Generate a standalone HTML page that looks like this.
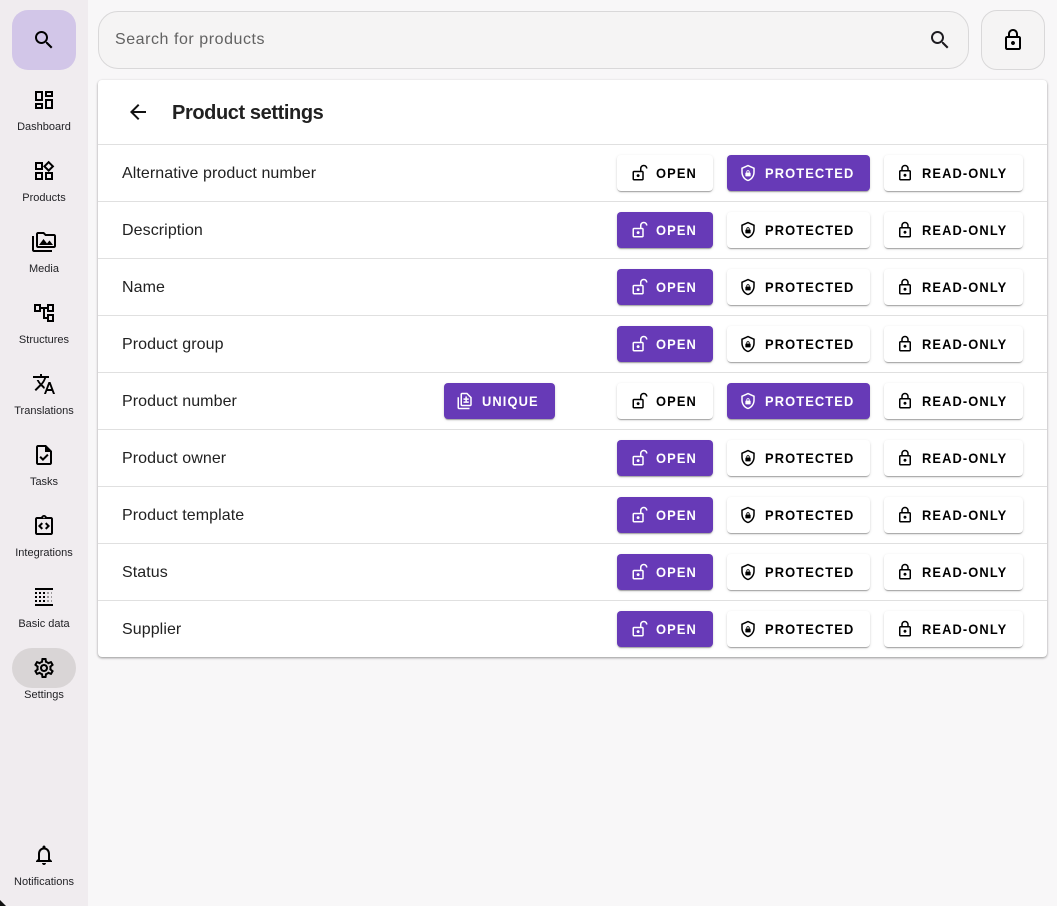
<!DOCTYPE html>
<html lang="en">
<head>
<meta charset="utf-8">
<title>Product settings</title>
<style>
html,body{margin:0;padding:0}
body{width:1057px;height:906px;position:relative;overflow:hidden;background:#f8f7f8;font-family:"Liberation Sans",sans-serif;color:#1d1b20}
svg{display:block;fill:currentColor}
.abs{position:absolute}
#side{position:absolute;left:0;top:0;width:88px;height:906px;background:#f0ecef}
.tile{position:absolute;left:12px;width:64px}
.nav svg{position:absolute;left:32px;width:24px;height:24px;color:#000}
.lbl{position:absolute;left:0;width:88px;text-align:center;font-size:11px;line-height:14px;color:#1f1f23;letter-spacing:0}
#search{position:absolute;left:98px;top:11px;width:869px;height:56px;background:#f5f4f4;border:1px solid #d9d8d9;border-radius:20px}
#search span{position:absolute;left:16px;top:18px;font-size:16px;line-height:20px;letter-spacing:.55px;color:#626262}
#lockbtn{position:absolute;left:981px;top:10px;width:62px;height:58px;background:#f5f4f4;border:1px solid #d9d8d9;border-radius:16px}
#card{position:absolute;left:98px;top:80px;width:949px;height:577px;background:#fff;border-radius:4px;box-shadow:0 1px 2px rgba(0,0,0,.32),0 1px 3px rgba(0,0,0,.1)}
#card h1{position:absolute;left:74px;top:21px;margin:0;font-size:20px;line-height:24px;font-weight:bold;color:#212121;letter-spacing:-.4px}
.row{position:absolute;left:0;width:949px;height:57px;border-top:1px solid #e0e0e0;box-sizing:border-box}
.row .t{position:absolute;left:24px;top:19px;font-size:16px;line-height:20px;color:#212121;letter-spacing:.08px}
.b{position:absolute;top:10px;height:36px;border-radius:4px;background:#fff;color:#000;box-shadow:0 2px 1px -1px rgba(0,0,0,.2),0 1px 1px rgba(0,0,0,.14),0 1px 3px rgba(0,0,0,.12);font-size:14px;line-height:36px;font-weight:bold;letter-spacing:1.2px;white-space:nowrap}
.b.on{background:#673ab7;color:#fff}
.b svg{position:absolute;top:9px;width:18px;height:18px}
.b span{position:absolute;top:0;transform:scaleX(.92);transform-origin:0 50%}
.o{left:519px;width:96px}.o svg{left:13.5px}.o span{left:39px}
.p{left:629px;width:143px}.p svg{left:12px}.p span{left:38px}
.r{left:786px;width:139px}.r svg{left:12px}.r span{left:38px}
.u{left:346px;width:111px}.u svg{left:12px}.u span{left:38px}
</style>
</head>
<body>
<svg width="0" height="0" style="position:absolute">
<defs>
<symbol id="i-search" viewBox="0 0 24 24"><path d="M15.5 14h-.79l-.28-.27C15.41 12.59 16 11.11 16 9.5 16 5.91 13.09 3 9.5 3S3 5.91 3 9.5 5.91 16 9.5 16c1.61 0 3.09-.59 4.23-1.57l.27.28v.79l5 4.99L20.49 19l-4.99-5zm-6 0C7.01 14 5 11.99 5 9.5S7.01 5 9.5 5 14 7.01 14 9.5 11.99 14 9.5 14z"/></symbol>
<symbol id="i-lock" viewBox="0 0 24 24"><path d="M18 8h-1V6c0-2.76-2.24-5-5-5S7 3.24 7 6v2H6c-1.1 0-2 .9-2 2v10c0 1.1.9 2 2 2h12c1.1 0 2-.9 2-2V10c0-1.1-.9-2-2-2zM9 6c0-1.66 1.34-3 3-3s3 1.34 3 3v2H9V6zm9 14H6V10h12v10zm-6-3c1.1 0 2-.9 2-2s-.9-2-2-2-2 .9-2 2 .9 2 2 2z"/></symbol>
<symbol id="i-open" viewBox="0 0 24 24"><path d="M4 9h8V6c0-2.76 2.24-5 5-5s5 2.24 5 5h-2c0-1.66-1.34-3-3-3s-3 1.34-3 3v3h1c1.1 0 2 .9 2 2v9c0 1.1-.9 2-2 2H4c-1.1 0-2-.9-2-2v-9c0-1.1.9-2 2-2zm0 11h11v-9H4v9zm5.5-2.5c-1.1 0-2-.9-2-2s.9-2 2-2 2 .9 2 2-.9 2-2 2z"/></symbol>
<symbol id="i-shield" viewBox="0 0 24 24"><path d="M12 1L3 5v6c0 5.55 3.84 10.74 9 12 5.16-1.26 9-6.45 9-12V5l-9-4zm7 10c0 4.52-2.98 8.69-7 9.93-4.02-1.24-7-5.41-7-9.93V6.3l7-3.11 7 3.11V11z"/><path d="M14.6 11.5h-.4v-1.2c0-1.2-1-2.2-2.2-2.2s-2.2 1-2.2 2.2v1.2h-.4c-.5 0-.9.4-.9.9v3.2c0 .5.4.9.9.9h5.2c.5 0 .9-.4.9-.9v-3.2c0-.5-.4-.9-.9-.9zm-1.6 0h-2v-1.2c0-.55.45-1 1-1s1 .45 1 1v1.2z"/></symbol>
<symbol id="i-unique" viewBox="0 0 24 24"><path d="M18 23H4c-1.1 0-2-.9-2-2V7h2v14h14v2zM15 1H8c-1.1 0-1.99.9-1.99 2L6 17c0 1.1.89 2 1.99 2H19c1.1 0 2-.9 2-2V7l-6-6zm4 16H8V3h6.17L19 7.83V17zM14.5 6h-2v2.5H10v2h2.5V13h2v-2.5H17v-2h-2.5V6zM10 14.5h7v-2h-7v2z"/></symbol>
</defs>
</svg>

<div id="side">
  <div class="tile" style="top:10px;height:60px;background:#d2c6e8;border-radius:16px"></div>
  <div class="tile" style="top:648px;height:40px;background:#d9d5d6;border-radius:20px"></div>
  <div class="nav">
    <svg viewBox="0 0 24 24" style="top:28px"><path d="M15.5 14h-.79l-.28-.27C15.41 12.59 16 11.11 16 9.5 16 5.91 13.09 3 9.5 3S3 5.91 3 9.5 5.91 16 9.5 16c1.61 0 3.09-.59 4.23-1.57l.27.28v.79l5 4.99L20.49 19l-4.99-5zm-6 0C7.01 14 5 11.99 5 9.5S7.01 5 9.5 5 14 7.01 14 9.5 11.99 14 9.5 14z"/></svg>
    <svg viewBox="0 0 24 24" style="top:88px"><path d="M19 5v2h-4V5h4M9 5v6H5V5h4m10 8v6h-4v-6h4M9 17v2H5v-2h4M21 3h-8v6h8V3zM11 3H3v10h8V3zm10 8h-8v10h8V11zm-10 4H3v6h8v-6z"/></svg>
    <svg viewBox="0 0 24 24" style="top:159px"><path d="M16.66 4.52l2.83 2.83-2.83 2.83-2.83-2.83 2.83-2.83M9 5v4H5V5h4m10 10v4h-4v-4h4M9 15v4H5v-4h4m7.66-13.31L11 7.34 16.66 13l5.66-5.66-5.66-5.65zM11 3H3v8h8V3zm10 10h-8v8h8v-8zm-10 0H3v8h8v-8z"/></svg>
    <svg viewBox="0 0 24 24" style="top:230px"><path d="M2 6H0v5h.01L0 20c0 1.1.9 2 2 2h18v-2H2V6zm5 9h14l-3.5-4.5-2.5 3.01L11.5 9zM22 4h-8l-2-2H6c-1.1 0-1.99.9-1.99 2L4 16c0 1.1.9 2 2 2h16c1.1 0 2-.9 2-2V6c0-1.1-.9-2-2-2zm0 12H6V4h5.17l1.41 1.41.59.59H22v10z"/></svg>
    <svg viewBox="0 0 24 24" style="top:301px"><path d="M22 11V3h-7v3H9V3H2v8h7V8h2v10h4v3h7v-8h-7v3h-2V8h2v3h7zM7 9H4V5h3v4zm10 6h3v4h-3v-4zm0-10h3v4h-3V5z"/></svg>
    <svg viewBox="0 0 24 24" style="top:372px"><path d="M12.87 15.07l-2.54-2.51.03-.03c1.74-1.94 2.98-4.17 3.71-6.53H17V4h-7V2H8v2H1v1.99h11.17C11.5 7.92 10.44 9.75 9 11.35 8.07 10.32 7.3 9.19 6.69 8h-2c.73 1.63 1.73 3.17 2.98 4.56l-5.09 5.02L4 19l5-5 3.11 3.11.76-2.04zM18.5 10h-2L12 22h2l1.12-3h4.75L21 22h2l-4.5-12zm-2.62 7l1.62-4.33L19.12 17h-3.24z"/></svg>
    <svg viewBox="0 0 24 24" style="top:443px"><path d="M14 2H6c-1.1 0-1.99.9-1.99 2L4 20c0 1.1.89 2 1.99 2H18c1.1 0 2-.9 2-2V8l-6-6zm4 18H6V4h7v5h5v11zm-9.18-6.95L7.4 14.46 10.94 18l5.66-5.66-1.41-1.41-4.24 4.24-2.13-2.12z"/></svg>
    <svg viewBox="0 0 24 24" style="top:514px"><path d="M11 14.17L8.83 12 11 9.83 9.59 8.41 6 12l3.59 3.59L11 14.17zM14.41 15.59L18 12l-3.59-3.59L13 9.83 15.17 12 13 14.17l1.41 1.42zM19 3h-4.18C14.4 1.84 13.3 1 12 1s-2.4.84-2.82 2H5c-1.1 0-2 .9-2 2v14c0 1.1.9 2 2 2h14c1.1 0 2-.9 2-2V5c0-1.1-.9-2-2-2zm-7-.25c.41 0 .75.34.75.75s-.34.75-.75.75-.75-.34-.75-.75.34-.75.75-.75zM19 19H5V5h14v14z"/></svg>
    <svg viewBox="0 0 24 24" style="top:585px"><path d="M3 3h18v2H3zM3 19h18v2H3zM3 7h2v2H3zM7 7h2v2H7zM11 7h2v2h-2zM3 11h2v2H3zM7 11h2v2H7zM11 11h2v2h-2zM3 15h2v2H3zM7 15h2v2H7zM11 15h2v2h-2z"/><path opacity=".35" d="M15 7h2v2h-2zM19 7h1v2h-1zM15 11h2v2h-2zM19 11h1v2h-1zM15 15h2v2h-2zM19 15h1v2h-1z"/></svg>
    <svg viewBox="0 0 24 24" style="top:656px"><path d="M19.43 12.98c.04-.32.07-.64.07-.98 0-.34-.03-.66-.07-.98l2.11-1.65c.19-.15.24-.42.12-.64l-2-3.46c-.09-.16-.26-.25-.44-.25-.06 0-.12.01-.17.03l-2.49 1c-.52-.4-1.08-.73-1.69-.98l-.38-2.65C14.46 2.18 14.25 2 14 2h-4c-.25 0-.46.18-.49.42l-.38 2.65c-.61.25-1.17.59-1.69.98l-2.49-1c-.06-.02-.12-.03-.18-.03-.17 0-.34.09-.43.25l-2 3.46c-.13.22-.07.49.12.64l2.11 1.65c-.04.32-.07.65-.07.98 0 .33.03.66.07.98l-2.11 1.65c-.19.15-.24.42-.12.64l2 3.46c.09.16.26.25.44.25.06 0 .12-.01.17-.03l2.49-1c.52.4 1.08.73 1.69.98l.38 2.65c.03.24.24.42.49.42h4c.25 0 .46-.18.49-.42l.38-2.65c.61-.25 1.17-.59 1.69-.98l2.49 1c.06.02.12.03.18.03.17 0 .34-.09.43-.25l2-3.46c.12-.22.07-.49-.12-.64l-2.11-1.65zm-1.98-1.71c.04.31.05.52.05.73 0 .21-.02.43-.05.73l-.14 1.13.89.7 1.08.84-.7 1.21-1.27-.51-1.04-.42-.9.68c-.43.32-.84.56-1.25.73l-1.06.43-.16 1.13-.2 1.35h-1.4l-.19-1.35-.16-1.13-1.06-.43c-.43-.18-.83-.41-1.23-.71l-.91-.7-1.06.43-1.27.51-.7-1.21 1.08-.84.89-.7-.14-1.13c-.03-.31-.05-.54-.05-.74s.02-.43.05-.73l.14-1.13-.89-.7-1.08-.84.7-1.21 1.27.51 1.04.42.9-.68c.43-.32.84-.56 1.25-.73l1.06-.43.16-1.13.2-1.35h1.39l.19 1.35.16 1.13 1.06.43c.43.18.83.41 1.23.71l.91.7 1.06-.43 1.27-.51.7 1.21-1.07.85-.89.7.14 1.13zM12 8c-2.21 0-4 1.79-4 4s1.79 4 4 4 4-1.79 4-4-1.79-4-4-4zm0 6c-1.1 0-2-.9-2-2s.9-2 2-2 2 .9 2 2-.9 2-2 2z"/></svg>
    <svg viewBox="0 0 24 24" style="top:843px"><path d="M12 22c1.1 0 2-.9 2-2h-4c0 1.1.9 2 2 2zm6-6v-5c0-3.07-1.63-5.64-4.5-6.32V4c0-.83-.67-1.5-1.5-1.5s-1.5.67-1.5 1.5v.68C7.64 5.36 6 7.92 6 11v5l-2 2v1h16v-1l-2-2zm-2 1H8v-6c0-2.48 1.51-4.5 4-4.5s4 2.02 4 4.5v6z"/></svg>
  </div>
  <div class="lbl" style="top:120px">Dashboard</div>
  <div class="lbl" style="top:191px">Products</div>
  <div class="lbl" style="top:262px">Media</div>
  <div class="lbl" style="top:333px">Structures</div>
  <div class="lbl" style="top:404px">Translations</div>
  <div class="lbl" style="top:475px">Tasks</div>
  <div class="lbl" style="top:546px">Integrations</div>
  <div class="lbl" style="top:617px">Basic data</div>
  <div class="lbl" style="top:688px">Settings</div>
  <div class="lbl" style="top:875px">Notifications</div>
  <div class="abs" style="left:0;top:900px;width:6px;height:6px;background:#111;clip-path:polygon(0 0,100% 100%,0 100%)"></div>
</div>

<div id="search"><span>Search for products</span>
  <svg class="abs" style="left:829px;top:16px;width:24px;height:24px;color:#1d1b20"><use href="#i-search"/></svg>
</div>
<div id="lockbtn">
  <svg class="abs" style="left:19px;top:17px;width:24px;height:24px;color:#000"><use href="#i-lock"/></svg>
</div>

<div id="card">
  <svg class="abs" viewBox="0 0 24 24" style="left:28px;top:20px;width:24px;height:24px;color:#111"><path d="M20 11H7.83l5.59-5.59L12 4l-8 8 8 8 1.41-1.41L7.83 13H20v-2z"/></svg>
  <h1>Product settings</h1>

  <div class="row" style="top:64px"><div class="t">Alternative product number</div>
    <div class="b o"><svg><use href="#i-open"/></svg><span>OPEN</span></div>
    <div class="b p on"><svg><use href="#i-shield"/></svg><span>PROTECTED</span></div>
    <div class="b r"><svg><use href="#i-lock"/></svg><span>READ-ONLY</span></div>
  </div>
  <div class="row" style="top:121px"><div class="t">Description</div>
    <div class="b o on"><svg><use href="#i-open"/></svg><span>OPEN</span></div>
    <div class="b p"><svg><use href="#i-shield"/></svg><span>PROTECTED</span></div>
    <div class="b r"><svg><use href="#i-lock"/></svg><span>READ-ONLY</span></div>
  </div>
  <div class="row" style="top:178px"><div class="t">Name</div>
    <div class="b o on"><svg><use href="#i-open"/></svg><span>OPEN</span></div>
    <div class="b p"><svg><use href="#i-shield"/></svg><span>PROTECTED</span></div>
    <div class="b r"><svg><use href="#i-lock"/></svg><span>READ-ONLY</span></div>
  </div>
  <div class="row" style="top:235px"><div class="t">Product group</div>
    <div class="b o on"><svg><use href="#i-open"/></svg><span>OPEN</span></div>
    <div class="b p"><svg><use href="#i-shield"/></svg><span>PROTECTED</span></div>
    <div class="b r"><svg><use href="#i-lock"/></svg><span>READ-ONLY</span></div>
  </div>
  <div class="row" style="top:292px"><div class="t">Product number</div>
    <div class="b u on"><svg><use href="#i-unique"/></svg><span>UNIQUE</span></div>
    <div class="b o"><svg><use href="#i-open"/></svg><span>OPEN</span></div>
    <div class="b p on"><svg><use href="#i-shield"/></svg><span>PROTECTED</span></div>
    <div class="b r"><svg><use href="#i-lock"/></svg><span>READ-ONLY</span></div>
  </div>
  <div class="row" style="top:349px"><div class="t">Product owner</div>
    <div class="b o on"><svg><use href="#i-open"/></svg><span>OPEN</span></div>
    <div class="b p"><svg><use href="#i-shield"/></svg><span>PROTECTED</span></div>
    <div class="b r"><svg><use href="#i-lock"/></svg><span>READ-ONLY</span></div>
  </div>
  <div class="row" style="top:406px"><div class="t">Product template</div>
    <div class="b o on"><svg><use href="#i-open"/></svg><span>OPEN</span></div>
    <div class="b p"><svg><use href="#i-shield"/></svg><span>PROTECTED</span></div>
    <div class="b r"><svg><use href="#i-lock"/></svg><span>READ-ONLY</span></div>
  </div>
  <div class="row" style="top:463px"><div class="t">Status</div>
    <div class="b o on"><svg><use href="#i-open"/></svg><span>OPEN</span></div>
    <div class="b p"><svg><use href="#i-shield"/></svg><span>PROTECTED</span></div>
    <div class="b r"><svg><use href="#i-lock"/></svg><span>READ-ONLY</span></div>
  </div>
  <div class="row" style="top:520px"><div class="t">Supplier</div>
    <div class="b o on"><svg><use href="#i-open"/></svg><span>OPEN</span></div>
    <div class="b p"><svg><use href="#i-shield"/></svg><span>PROTECTED</span></div>
    <div class="b r"><svg><use href="#i-lock"/></svg><span>READ-ONLY</span></div>
  </div>
</div>
</body>
</html>
